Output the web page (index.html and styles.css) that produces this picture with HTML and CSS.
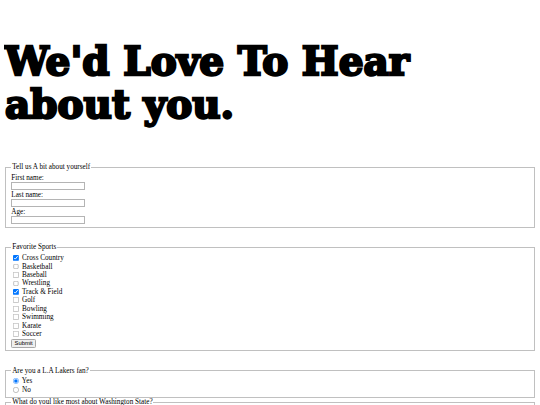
FILE: index.html
```html
<!DOCTYPE html>
<html lang="en">
<head>
<meta charset="utf-8">
<title>Survey</title>
<link rel="stylesheet" href="styles.css">
</head>
<body>
<h1 class="headline">We'd Love To Hear about you.</h1>
<form class="survey">
  <fieldset class="group spaced">
    <legend>Tell us A bit about yourself</legend>
    First name:<br><input class="field" type="text" name="first"><br>
    Last name:<br><input class="field" type="text" name="last"><br>
    Age:<br><input class="field" type="text" name="age">
  </fieldset>
  <fieldset class="group spaced">
    <legend>Favorite Sports</legend>
    <input class="tick" type="checkbox" checked> Cross Country<br>
    <input class="tick" type="checkbox"> Basketball<br>
    <input class="tick" type="checkbox"> Baseball<br>
    <input class="tick" type="checkbox"> Wrestling<br>
    <input class="tick" type="checkbox" checked> Track &amp; Field<br>
    <input class="tick" type="checkbox"> Golf<br>
    <input class="tick" type="checkbox"> Bowling<br>
    <input class="tick" type="checkbox"> Swimming<br>
    <input class="tick" type="checkbox"> Karate<br>
    <input class="tick" type="checkbox"> Soccer<br>
    <input class="send" type="submit" value="Submit">
  </fieldset>
  <fieldset class="group">
    <legend>Are you a L.A Lakers fan?</legend>
    <input class="tick" type="radio" name="lakers" checked> Yes<br>
    <input class="tick" type="radio" name="lakers"> No
  </fieldset>
  <fieldset class="group">
    <legend>What do youl like most about Washington State?</legend>
    <textarea rows="4" cols="40"></textarea>
  </fieldset>
</form>
</body>
</html>
```
FILE: styles.css
```css
body {
  margin: 0 4px;
  font-family: "Liberation Serif", "Times New Roman", serif;
}

.headline {
  font-family: "DejaVu Serif", serif;
  font-weight: 900;
  font-size: 39px;
  line-height: 43px;
  margin: 40px 0 37px 1px;
  -webkit-text-stroke: 2.4px #000;
}

/* the form is laid out at desktop size and shown scaled down */
.survey {
  zoom: 0.45;
  font-size: 16px;
  line-height: 18.8px;
}

.group {
  margin: 0 2px;
  padding: 5px 12px 6px;
  border: 2px groove #c0c0c0;
}

.spaced {
  margin-bottom: 34px;
}

.field {
  box-sizing: border-box;
  width: 164px;
  height: 18px;
  margin: 0;
  vertical-align: top;
  border: 2px solid #b4b4b4;
  background: #fff;
}

.tick {
  margin: 0 3px 0 4px;
  vertical-align: -2px;
}

.send {
  border: 2px solid #a8a8a8;
  border-radius: 3px;
  background: #efefef;
  font-size: 13px;
  padding: 1px 5px;
}
```
